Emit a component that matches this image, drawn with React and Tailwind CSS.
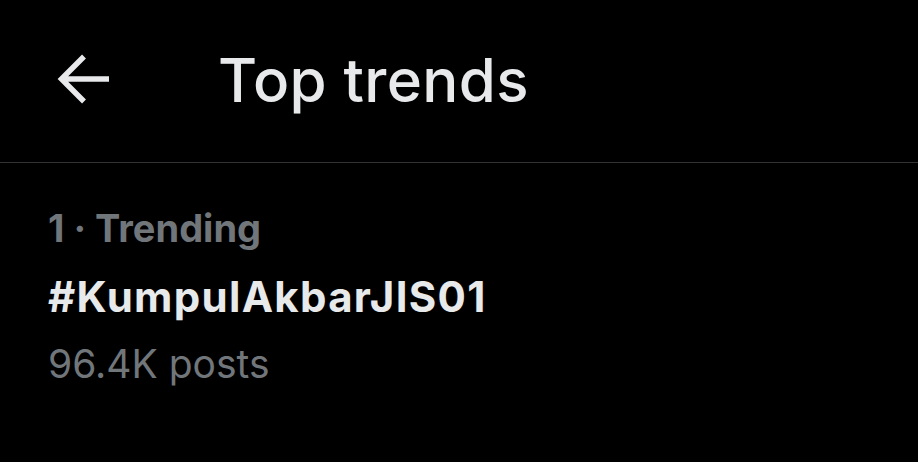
export default function App() {
  return (
    <div
      className="w-[918px] h-[462px] bg-black overflow-hidden"
      style={{ fontFamily: "Inter, 'Noto Sans', sans-serif" }}
    >
      {/* Header */}
      <div className="h-[163px] flex items-center border-b border-[#2f3336]">
        <div className="w-[218px] pl-[57px] flex items-center -mt-[4px]">
          <svg width="54" height="52" viewBox="0 0 54 52" className="text-[#e7e9ea]">
            <path
              d="M5 26H52M27 3.5L4.5 26L27 48.5"
              fill="none"
              stroke="currentColor"
              strokeWidth="5.5"
            />
          </svg>
        </div>
        <h1 className="text-[60px] font-medium text-[#e7e9ea] leading-none tracking-[0.4px] -mt-[2px]">
          Top trends
        </h1>
      </div>

      {/* Trend item */}
      <div className="px-[48px] pt-[35px]">
        <p className="text-[38px] font-bold text-[#71767b] leading-[60px]">1 · Trending</p>
        <p className="mt-[11px] text-[42px] font-bold text-[#e7e9ea] leading-[56px] tracking-[1.3px]">
          #KumpulAkbarJIS01
        </p>
        <p className="mt-[11px] text-[39px] text-[#71767b] leading-[56px]">96.4K posts</p>
      </div>
    </div>
  );
}
